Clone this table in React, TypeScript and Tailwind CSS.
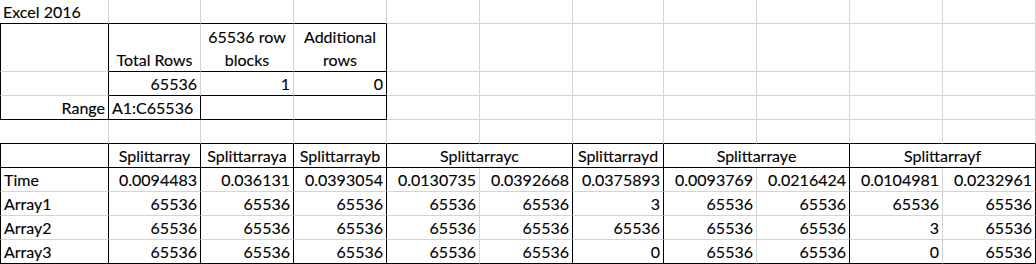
import React from "react";

type C = {
  t?: string;
  a?: "l" | "c" | "r";
  r?: "k" | "g";
  b?: "k" | "g";
  l?: boolean;
  span?: boolean;
};

const R: Record<string, string> = { k: "border-r-black", g: "border-r-[#d4d4d4]" };
const B: Record<string, string> = { k: "border-b-black", g: "border-b-[#d4d4d4]" };
const A: Record<string, string> = { l: "justify-start text-left", c: "justify-center text-center", r: "justify-end text-right" };

const g10 = (): C[] => Array.from({ length: 7 }, () => ({ r: "g", b: "g" }));

const rows: C[][] = [
  [
    { t: "Excel 2016", a: "l", r: "g", b: "k" },
    { r: "g", b: "k" },
    { r: "g", b: "k" },
    { r: "g", b: "k" },
    ...g10(),
  ],
  [
    { l: true, r: "k", b: "g" },
    { t: "Total Rows", a: "c", r: "g", b: "k" },
    { t: "65536 row\nblocks", a: "c", r: "g", b: "k" },
    { t: "Additional\nrows", a: "c", r: "k", b: "k" },
    ...g10(),
  ],
  [
    { l: true, r: "k", b: "g" },
    { t: "65536", a: "r", r: "g", b: "k" },
    { t: "1", a: "r", r: "g", b: "k" },
    { t: "0", a: "r", r: "k", b: "k" },
    ...g10(),
  ],
  [
    { t: "Range", a: "r", l: true, r: "k", b: "k" },
    { t: "A1:C65536", a: "l", r: "k", b: "k" },
    { r: "g", b: "k" },
    { r: "k", b: "k" },
    ...g10(),
  ],
  Array.from({ length: 11 }, () => ({ r: "g", b: "k" } as C)),
  [
    { l: true, r: "k", b: "k" },
    { t: "Splittarray", a: "c", r: "k", b: "k" },
    { t: "Splittarraya", a: "c", r: "k", b: "k" },
    { t: "Splittarrayb", a: "c", r: "k", b: "k" },
    { t: "Splittarrayc", a: "c", r: "k", b: "k", span: true },
    { t: "Splittarrayd", a: "c", r: "k", b: "k" },
    { t: "Splittarraye", a: "c", r: "k", b: "k", span: true },
    { t: "Splittarrayf", a: "c", r: "k", b: "k", span: true },
  ],
];

const data: [string, string[]][] = [
  ["Time", ["0.0094483", "0.036131", "0.0393054", "0.0130735", "0.0392668", "0.0375893", "0.0093769", "0.0216424", "0.0104981", "0.0232961"]],
  ["Array1", ["65536", "65536", "65536", "65536", "65536", "3", "65536", "65536", "65536", "65536"]],
  ["Array2", ["65536", "65536", "65536", "65536", "65536", "65536", "65536", "65536", "3", "65536"]],
  ["Array3", ["65536", "65536", "65536", "65536", "65536", "0", "65536", "65536", "0", "65536"]],
];
const rb: ("k" | "g")[] = ["k", "k", "k", "g", "k", "k", "g", "k", "g", "k"];

data.forEach(([label, vals], i) => {
  const bb: "k" | "g" = i === data.length - 1 ? "k" : "g";
  rows.push([
    { t: label, a: "l", l: true, r: "k", b: bb },
    ...vals.map((v, j) => ({ t: v, a: "r" as const, r: rb[j], b: bb })),
  ]);
});

function Cell({ c }: { c: C }) {
  const cls = [
    "flex items-end border-solid px-[3px] whitespace-pre leading-[23px]",
    "border-r border-b",
    R[c.r || "g"],
    B[c.b || "g"],
    A[c.a || "l"],
    c.l ? "border-l border-l-black" : "",
    c.span ? "col-span-2" : "",
  ].join(" ");
  return <div className={cls}>{c.t ? <span>{c.t}</span> : null}</div>;
}

export default function App() {
  return (
    <div className="w-[1036px] h-[264px] overflow-hidden bg-white text-black text-[16px] [-webkit-text-stroke:0.12px_black] font-['Lato','Liberation_Sans',sans-serif]">
      <div className="grid grid-cols-[109px_92px_93px_93px_93px_93px_91px_93px_93px_93px_93px] grid-rows-[24px_48px_repeat(8,24px)]">
        {rows.map((row, i) => row.map((c, j) => <Cell key={`${i}-${j}`} c={c} />))}
      </div>
    </div>
  );
}
